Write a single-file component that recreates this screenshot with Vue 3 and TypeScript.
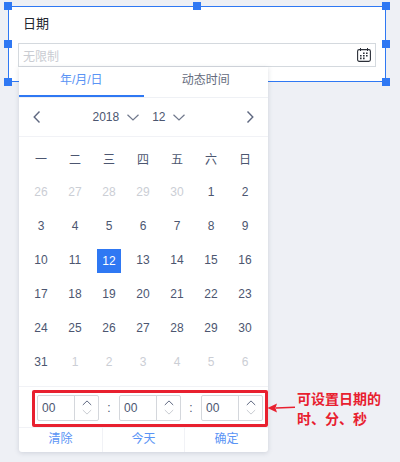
<template>
  <div class="page">
    <div class="widget">
      <i v-for="h in handles" :key="h" class="handle" :class="h"></i>
      <div class="label">日期</div>
      <div class="input">
        <span>无限制</span>
        <svg class="cal" width="14" height="14" viewBox="0 0 14 14">
          <rect x="0.6" y="1.6" width="12.8" height="11.8" rx="1.6" fill="none" stroke="#2b2f38" stroke-width="1.1" />
          <path d="M3.5 0v3M10.5 0v3" stroke="#2b2f38" stroke-width="1" />
          <path d="M6 4.5h1.6v1.6H6zM9 4.5h1.6v1.6H9zM3 7h1.6v1.6H3zM6 7h1.6v1.6H6zM9 7h1.6v1.6H9zM3 9.6h1.6v1.6H3zM6 9.6h1.6v1.6H6z" fill="#2b2f38" />
        </svg>
      </div>

      <div class="popover">
        <div class="tabs">
          <div class="tab active">年/月/日</div>
          <div class="tab">动态时间</div>
        </div>
        <div class="nav">
          <svg width="8" height="12" viewBox="0 0 8 12"><path d="M6.5 0.5 1.2 6l5.3 5.5" class="line" /></svg>
          <div class="selects">
            <span>2018</span>
            <svg class="down" width="12" height="7" viewBox="0 0 12 7"><path d="M0.5 0.8 6 6l5.5-5.2" class="line thin" /></svg>
            <span class="month">12</span>
            <svg class="down tight" width="12" height="7" viewBox="0 0 12 7"><path d="M0.5 0.8 6 6l5.5-5.2" class="line thin" /></svg>
          </div>
          <svg width="8" height="12" viewBox="0 0 8 12"><path d="M1.5 0.5 6.8 6l-5.3 5.5" class="line" /></svg>
        </div>
        <div class="grid">
          <div v-for="w in weeks" :key="w" class="cell">{{ w }}</div>
          <div
            v-for="d in days"
            :key="d.key"
            class="cell"
            :class="{ muted: d.muted, today: d.text === 12 && !d.muted }"
          >
            <span>{{ d.text }}</span>
          </div>
        </div>
        <div class="time">
          <template v-for="(t, i) in times" :key="i">
            <span v-if="i > 0" class="colon">:</span>
            <div class="stepper">
              <span class="value">{{ t }}</span>
              <div class="arrows">
                <svg width="10" height="6" viewBox="0 0 10 6"><path d="M0.8 5 5 0.9 9.2 5" class="line up" /></svg>
                <svg width="10" height="6" viewBox="0 0 10 6"><path d="M0.8 1 5 5.1 9.2 1" class="line off" /></svg>
              </div>
            </div>
          </template>
        </div>
        <div class="footer">
          <div class="btn first">清除</div>
          <div class="btn">今天</div>
          <div class="btn">确定</div>
        </div>
      </div>
    </div>

    <div class="mark"></div>
    <svg class="pointer" width="30" height="12" viewBox="0 0 30 12">
      <path d="M28 5.2 9 6" stroke="#e8202f" stroke-width="1.6" fill="none" />
      <path d="M0.5 6 10 1.5 8.5 6l1.5 4.5z" fill="#e8202f" />
    </svg>
    <div class="note">可设置日期的<br />时、分、秒</div>
  </div>
</template>

<script setup lang="ts">
const handles = ['tl', 'tc', 'tr', 'ml', 'mr', 'bl', 'br']
const weeks = ['一', '二', '三', '四', '五', '六', '日']
const times = ['00', '00', '00']

interface Day {
  key: string
  text: number
  muted: boolean
}

const days: Day[] = []
for (let d = 26; d <= 30; d++) days.push({ key: `p${d}`, text: d, muted: true })
for (let d = 1; d <= 31; d++) days.push({ key: `c${d}`, text: d, muted: false })
for (let d = 1; d <= 6; d++) days.push({ key: `n${d}`, text: d, muted: true })
</script>

<style>
html,
body {
  margin: 0;
  background: #eef0f5;
}
</style>

<style scoped>
.page {
  position: relative;
  width: 400px;
  height: 462px;
  box-sizing: border-box;
  padding: 6px 14px 0 8px;
  overflow: hidden;
  background: #eef0f5;
  font-family: "Liberation Sans", "Noto Sans CJK SC", sans-serif;
  font-size: 12px;
  color: #4c5670;
}

.widget {
  position: relative;
  box-sizing: border-box;
  height: 76px;
  padding: 8px 9px 0;
  background: #fff;
  border: 1px solid #2f78f3;
}

.handle {
  position: absolute;
  width: 8px;
  height: 8px;
  background: #2f78f3;
}
.tl { left: -5px; top: -5px; }
.tc { left: 184px; top: -5px; }
.tr { right: -5px; top: -5px; }
.ml { left: -5px; top: 33px; }
.mr { right: -5px; top: 33px; }
.bl { left: -5px; bottom: -5px; }
.br { right: -5px; bottom: -5px; }

.label {
  height: 20px;
  padding-left: 5px;
  font-size: 13px;
  line-height: 18px;
  color: #23262e;
}

.input {
  display: flex;
  align-items: center;
  justify-content: space-between;
  box-sizing: border-box;
  height: 24px;
  margin-top: 8px;
  padding: 0 4px;
  background: #fff;
  border: 1px solid #d4d9de;
  color: #c9ccd2;
}

.cal {
  display: block;
}

.popover {
  position: absolute;
  left: 10px;
  top: 60px;
  width: 249px;
  height: 385px;
  display: flex;
  flex-direction: column;
  background: #fff;
  border-radius: 0 0 3px 3px;
  box-shadow: 0 1px 5px rgba(60, 70, 100, 0.18);
}

.tabs {
  display: flex;
  height: 31px;
  flex: none;
  box-sizing: border-box;
  border-bottom: 1px solid #eff1f5;
}

.tab {
  width: 50%;
  height: 30px;
  box-sizing: border-box;
  text-align: center;
  line-height: 27px;
  color: #646b7d;
}

.tab.active {
  color: #5a94f5;
  border-bottom: 2px solid #2f78f3;
}

.nav {
  display: flex;
  align-items: center;
  justify-content: space-between;
  height: 39px;
  flex: none;
  box-sizing: border-box;
  padding: 0 14px;
  border-bottom: 1px solid #f1f2f6;
}

.selects {
  display: flex;
  align-items: center;
  margin-right: 10px;
}

.down {
  margin-left: 8px;
}

.down.tight {
  margin-left: 7px;
}

.month {
  margin-left: 13px;
}

.line {
  fill: none;
  stroke: #5f6880;
  stroke-width: 1.4;
}

.line.thin {
  stroke: #70788c;
  stroke-width: 1.2;
}

.grid {
  display: grid;
  grid-template-columns: repeat(7, 34px);
  grid-auto-rows: 34px;
  flex: none;
  box-sizing: border-box;
  height: 250px;
  padding: 4px 0 0 5px;
  border-bottom: 1px solid #f1f2f6;
}

.cell {
  display: flex;
  align-items: center;
  justify-content: center;
}

.cell span {
  display: flex;
  align-items: center;
  justify-content: center;
  width: 24px;
  height: 24px;
}

.cell.muted {
  color: #cbced5;
}

.cell.today span {
  position: relative;
  top: 1px;
  background: #2f78f3;
  color: #fff;
}

.time {
  display: flex;
  align-items: center;
  flex: none;
  height: 41px;
  box-sizing: border-box;
  padding: 1px 0 0 18px;
  border-bottom: 1px solid #f1f2f6;
}

.stepper {
  display: flex;
  width: 62px;
  height: 26px;
  box-sizing: border-box;
  border: 1px solid #d4d7dc;
  border-radius: 2px;
}

.value {
  flex: 1;
  padding-left: 4px;
  line-height: 24px;
}

.arrows {
  display: flex;
  flex-direction: column;
  align-items: center;
  justify-content: center;
  gap: 3px;
  width: 23px;
  border-left: 1px solid #d4d7dc;
}

.arrows svg {
  display: block;
}

.line.up {
  stroke: #5f6880;
  stroke-width: 1;
}

.line.off {
  stroke: #c9ccd2;
  stroke-width: 1;
}

.colon {
  width: 20px;
  text-align: center;
}

.footer {
  display: flex;
  flex: 1;
  color: #5a94f5;
}

.btn {
  flex: none;
  width: 81px;
  text-align: center;
  line-height: 22px;
  border-right: 1px solid #f1f2f6;
}

.btn.first {
  width: 83px;
}

.btn:last-child {
  flex: 1;
  border-right: 0;
}

.mark {
  position: absolute;
  left: 32px;
  top: 390px;
  width: 236px;
  height: 37px;
  box-sizing: border-box;
  border: 3px solid #e8202f;
  border-radius: 2px;
}

.pointer {
  position: absolute;
  left: 267px;
  top: 402px;
}

.note {
  position: absolute;
  left: 297px;
  top: 389px;
  font-size: 14px;
  font-weight: 700;
  line-height: 20px;
  color: #e8202f;
}
</style>
